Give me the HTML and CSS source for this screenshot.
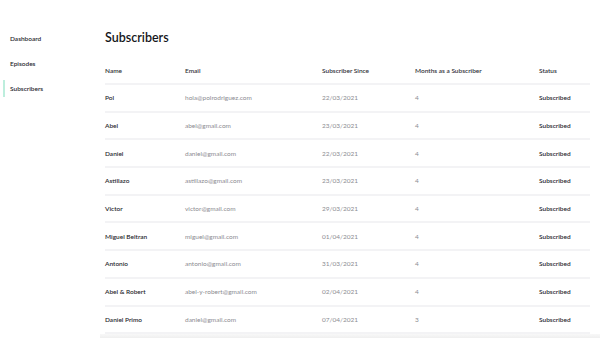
FILE: index.html
```html
<!DOCTYPE html>
<html lang="en">
<head>
  <meta charset="UTF-8" />
  <title>Subscribers</title>
  <link rel="stylesheet" href="styles.css">
</head>
<body>
  <div class="layout">
    <!-- Боковое меню -->
    <nav class="sidebar">
      <a href="#">Dashboard</a>
      <a href="#">Episodes</a>
      <a href="#" class="active">Subscribers</a>
    </nav>

    <main class="content">
      <h1>Subscribers</h1>
      <table class="subs">
        <colgroup>
          <col class="c-name"><col class="c-email"><col class="c-since"><col class="c-months"><col class="c-status">
        </colgroup>
        <thead>
          <tr><th>Name</th><th>Email</th><th>Subscriber Since</th><th>Months as a Subscriber</th><th>Status</th></tr>
        </thead>
        <tbody>
          <tr><td class="name">Pol</td><td>hola@polrodriguez.com</td><td>22/03/2021</td><td>4</td><td class="status">Subscribed</td></tr>
          <tr><td class="name">Abel</td><td>abel@gmail.com</td><td>23/03/2021</td><td>4</td><td class="status">Subscribed</td></tr>
          <tr><td class="name">Daniel</td><td>daniel@gmail.com</td><td>22/03/2021</td><td>4</td><td class="status">Subscribed</td></tr>
          <tr><td class="name">Astillazo</td><td>astillazo@gmail.com</td><td>23/03/2021</td><td>4</td><td class="status">Subscribed</td></tr>
          <tr><td class="name">Victor</td><td>victor@gmail.com</td><td>29/03/2021</td><td>4</td><td class="status">Subscribed</td></tr>
          <tr><td class="name">Miguel Beltran</td><td>miguel@gmail.com</td><td>01/04/2021</td><td>4</td><td class="status">Subscribed</td></tr>
          <tr><td class="name">Antonio</td><td>antonio@gmail.com</td><td>31/03/2021</td><td>4</td><td class="status">Subscribed</td></tr>
          <tr><td class="name">Abel &amp; Robert</td><td>abel-y-robert@gmail.com</td><td>02/04/2021</td><td>4</td><td class="status">Subscribed</td></tr>
          <tr><td class="name">Daniel Primo</td><td>daniel@gmail.com</td><td>07/04/2021</td><td>3</td><td class="status">Subscribed</td></tr>
        </tbody>
      </table>
    </main>
  </div>
  <div class="bottom-shade"></div>
</body>
</html>
```

FILE: styles.css
```css
body {
  margin: 0;
  font-family: Lato, "Noto Sans", sans-serif;
  background: #fff;
  color: #1d1d22;
  overflow: hidden;
}

.layout {
  display: grid;
  grid-template-columns: 90px 1fr;
  height: 338px;
}

/* Боковое меню */
.sidebar {
  display: flex;
  flex-direction: column;
  gap: 16px;
  padding-top: 34px;
}

.sidebar a {
  font-size: 6.5px;
  font-weight: 600;
  color: #2a2a30;
  text-decoration: none;
  line-height: 7px;
  padding: 1px 0 1px 5px;
  margin-left: 3px;
  border-left: 2px solid transparent;
}

.sidebar a.active {
  border-left-color: #bdeedd;
  padding-top: 5px;
  padding-bottom: 5px;
  margin-top: -4px;
}

/* Основной блок */
.content {
  padding: 0 10px 0 15px;
}

h1 {
  margin: 29px 0 0;
  font-size: 12.5px;
  font-weight: 600;
  line-height: 18px;
  color: #16161a;
}

.subs {
  width: 485px;
  margin-top: 10px;
  border-collapse: collapse;
  font-size: 6.5px;
}

.c-name { width: 80px; }
.c-email { width: 137px; }
.c-since { width: 93px; }
.c-months { width: 124px; }
.c-status { width: 51px; }

.subs th {
  text-align: left;
  font-weight: 600;
  color: #33333a;
  height: 26px;
  padding: 0;
  border-bottom: 2px solid #f3f3f5;
}

.subs td {
  height: 25.7px;
  padding: 0;
  color: #8c8c92;
  border-bottom: 2px solid #f3f3f5;
}

.subs td.name,
.subs td.status {
  color: #2a2a30;
  font-weight: 600;
}

/* Полоса внизу экрана */
.bottom-shade {
  position: fixed;
  left: 100px;
  right: 0;
  bottom: 0;
  height: 4px;
  background: linear-gradient(#f8f8f8, #efefef);
}
```
